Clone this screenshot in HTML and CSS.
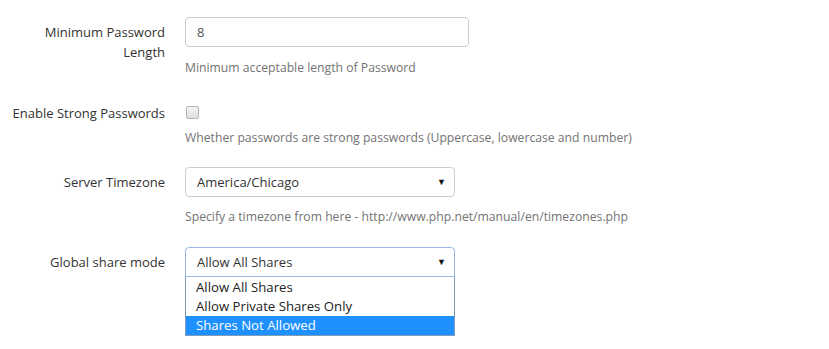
FILE: index.html
```html
<!DOCTYPE html>
<html lang="en">
<head>
    <meta charset="UTF-8">
    <title>Settings</title>
    <link rel="stylesheet" href="styles.css">
</head>
<body>
    <form class="settings">
        <div class="row">
            <label class="label">Minimum Password<br>Length</label>
            <div class="field">
                <input class="text-input" type="text" value="8">
                <p class="help">Minimum acceptable length of Password</p>
            </div>
        </div>

        <div class="row row-check">
            <label class="label">Enable Strong Passwords</label>
            <div class="field">
                <div class="check-wrap"><span class="checkbox"></span></div>
                <p class="help help-close">Whether passwords are strong passwords (Uppercase, lowercase and number)</p>
            </div>
        </div>

        <div class="row">
            <label class="label">Server Timezone</label>
            <div class="field">
                <div class="select">America/Chicago<span class="arrow">&#9660;</span></div>
                <p class="help help-tight">Specify a timezone from here - http://www.php.net/manual/en/timezones.php</p>
            </div>
        </div>

        <div class="row">
            <label class="label">Global share mode</label>
            <div class="field">
                <div class="select focus">Allow All Shares<span class="arrow">&#9660;</span></div>
                <ul class="options">
                    <li>Allow All Shares</li>
                    <li>Allow Private Shares Only</li>
                    <li class="selected">Shares Not Allowed</li>
                </ul>
            </div>
        </div>
    </form>
</body>
</html>
```

FILE: styles.css
```css
body {
    font-family: "Open Sans", Arial, sans-serif;
    font-size: 13px;
    color: #333;
    margin: 0;
    background: #fff;
}

.settings {
    padding-top: 17px;
}

.row {
    display: flex;
    align-items: flex-start;
    gap: 20px;
    margin-bottom: 20px;
}

.row-check {
    margin-bottom: 19px;
}

.label {
    width: 165px;
    text-align: right;
    line-height: 20px;
    padding-top: 5px;
    flex-shrink: 0;
}

.field {
    width: 284px;
}

.text-input {
    box-sizing: border-box;
    width: 284px;
    height: 30px;
    border: 1px solid #ccc;
    border-radius: 4px;
    padding: 0 11px;
    font-family: inherit;
    font-size: 13px;
    color: #555;
    display: block;
}

.help {
    color: #737373;
    font-size: 12.2px;
    margin: 11px 0 0;
    line-height: 20px;
    white-space: nowrap;
}

.help-close {
    margin-top: 6px;
}

.help-tight {
    margin-top: 10px;
}

.check-wrap {
    height: 20px;
    margin-top: 4px;
    display: flex;
    align-items: center;
}

.checkbox {
    display: block;
    width: 11px;
    height: 11px;
    margin-left: 1px;
    border: 1px solid #b5b5b5;
    border-radius: 2px;
    background: linear-gradient(#f4f4f4, #e0e0e0);
}

.select {
    box-sizing: border-box;
    width: 270px;
    height: 30px;
    border: 1px solid #ccc;
    border-radius: 4px;
    padding: 0 11px;
    line-height: 28px;
    color: #333;
    position: relative;
}

.select.focus {
    border-color: #9ab8e6;
    border-radius: 4px 4px 0 0;
}

.arrow {
    position: absolute;
    right: 8px;
    top: 0;
    font-size: 9px;
    color: #111;
}

.options {
    width: 270px;
    box-sizing: border-box;
    margin: -1px 0 0;
    padding: 1px 0 0;
    list-style: none;
    border: 1px solid #7f9db9;
    background: #fff;
}

.options li {
    padding-left: 10px;
    height: 19px;
    line-height: 19px;
    font-size: 13.2px;
    color: #222;
}

.options li.selected {
    background-color: #1e90ff;
    color: #fff;
}
```
